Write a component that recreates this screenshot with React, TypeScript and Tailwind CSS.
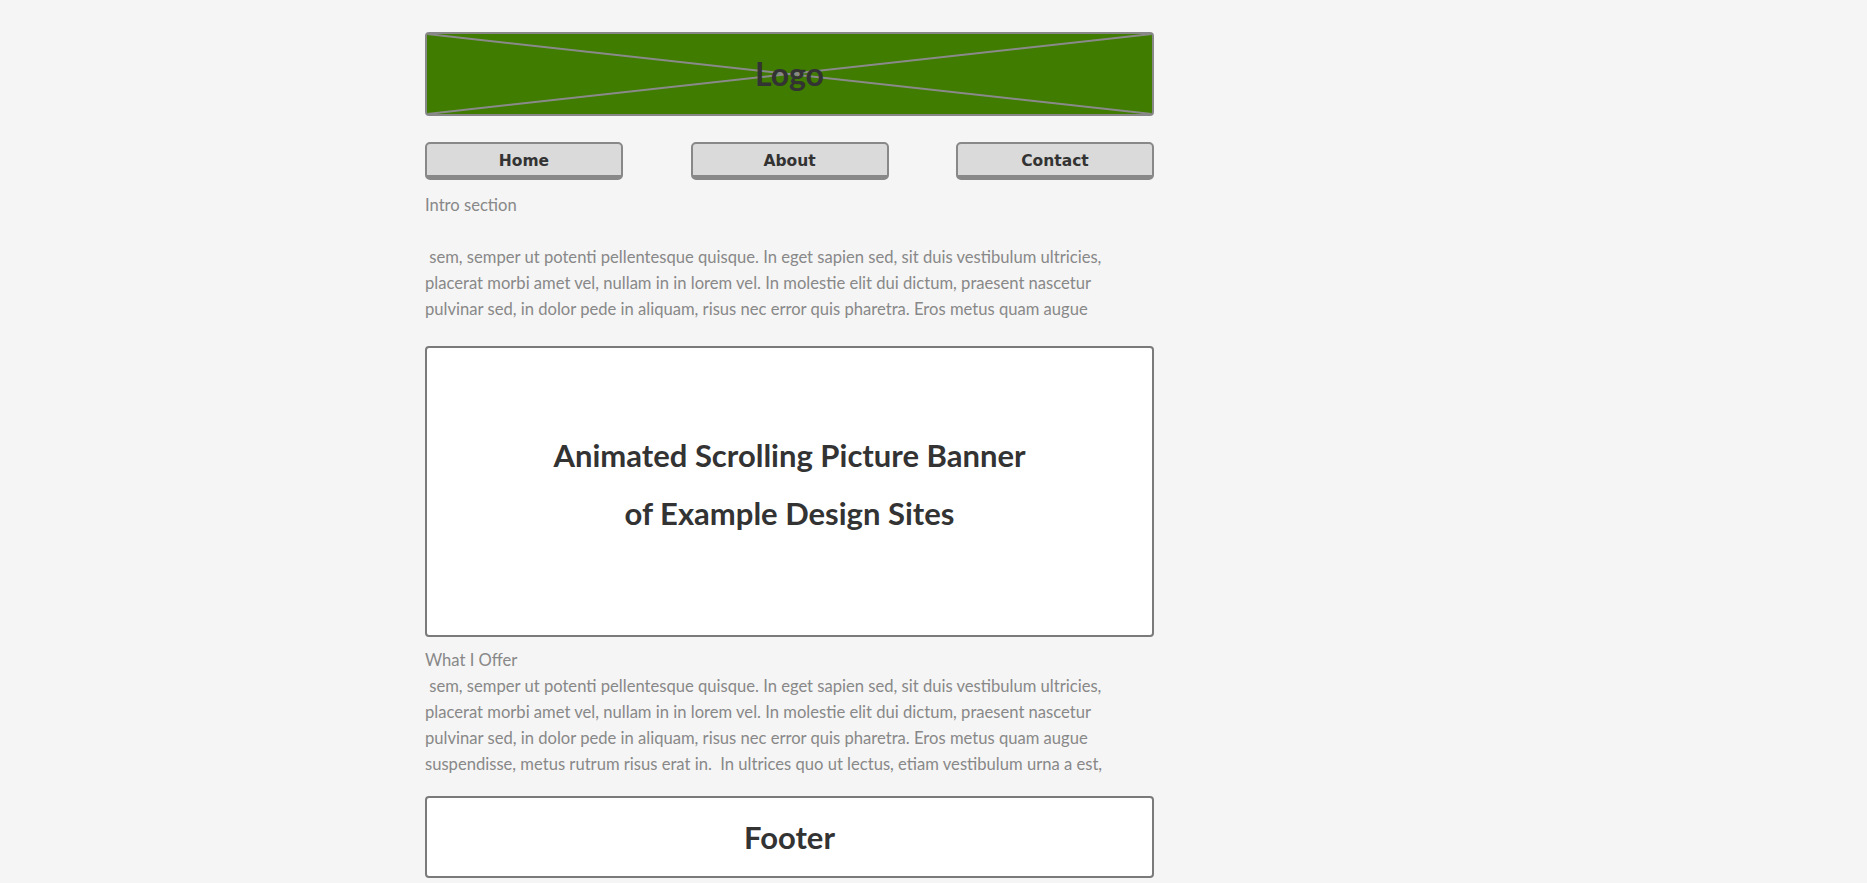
import React from 'react';

const para1 = [
  '\u00a0sem, semper ut potenti pellentesque quisque. In eget sapien sed, sit duis vestibulum ultricies,',
  'placerat morbi amet vel, nullam in in lorem vel. In molestie elit dui dictum, praesent nascetur',
  'pulvinar sed, in dolor pede in aliquam, risus nec error quis pharetra. Eros metus quam augue',
];

const para2 = [
  ...para1,
  'suspendisse, metus rutrum risus erat in.\u00a0 In ultrices quo ut lectus, etiam vestibulum urna a est,',
];

function NavButton({ label }: { label: string }) {
  return (
    <button className="w-[198px] h-[38px] rounded-[5px] border-2 border-b-[5px] border-[#888888] bg-[#dadada] text-[#333333] text-[15.5px] font-bold font-['DejaVu_Sans',sans-serif] flex items-center justify-center pt-[5px]">
      {label}
    </button>
  );
}

export default function App() {
  return (
    <div className="min-h-screen bg-[#f5f5f5] font-['Lato',sans-serif]">
      <div className="ml-[425px] w-[729px] pt-[32px] flex flex-col">
        {/* Logo */}
        <div className="relative h-[84px] rounded-[4px] border-2 border-[#888888] bg-[#3f7c00] flex items-center justify-center overflow-hidden">
          <svg className="absolute inset-0 w-full h-full" preserveAspectRatio="none" viewBox="0 0 100 100">
            <line x1="0" y1="0" x2="100" y2="100" stroke="#8a8a8a" strokeWidth="2" vectorEffect="non-scaling-stroke" />
            <line x1="100" y1="0" x2="0" y2="100" stroke="#8a8a8a" strokeWidth="2" vectorEffect="non-scaling-stroke" />
          </svg>
          <span className="relative text-[32px] font-bold text-[#333333]">Logo</span>
        </div>

        {/* Navigation */}
        <nav className="mt-[26px] flex justify-between">
          <NavButton label="Home" />
          <NavButton label="About" />
          <NavButton label="Contact" />
        </nav>

        {/* Intro */}
        <div className="mt-[12px] text-[16.6px] leading-[26px] text-[#888888] whitespace-nowrap">
          <p>Intro section</p>
          <p>&nbsp;</p>
          {para1.map((l, i) => (
            <p key={i}>{l}</p>
          ))}
        </div>

        {/* Banner */}
        <div className="mt-[24px] h-[291px] rounded-[4px] border-2 border-[#7a7a7a] bg-white flex flex-col items-center justify-center pb-[16px]">
          <p className="text-[31px] leading-[58px] font-bold text-[#333333]">Animated Scrolling Picture Banner</p>
          <p className="text-[31px] leading-[58px] font-bold text-[#333333]">of Example Design Sites</p>
        </div>

        {/* What I Offer */}
        <div className="mt-[10px] text-[16.6px] leading-[26px] text-[#888888] whitespace-nowrap">
          <p>What I Offer</p>
          {para2.map((l, i) => (
            <p key={i}>{l}</p>
          ))}
        </div>

        {/* Footer */}
        <div className="mt-[19px] h-[82px] rounded-[4px] border-2 border-[#7a7a7a] bg-white flex items-center justify-center">
          <p className="text-[31px] font-bold text-[#333333]">Footer</p>
        </div>
      </div>
    </div>
  );
}
